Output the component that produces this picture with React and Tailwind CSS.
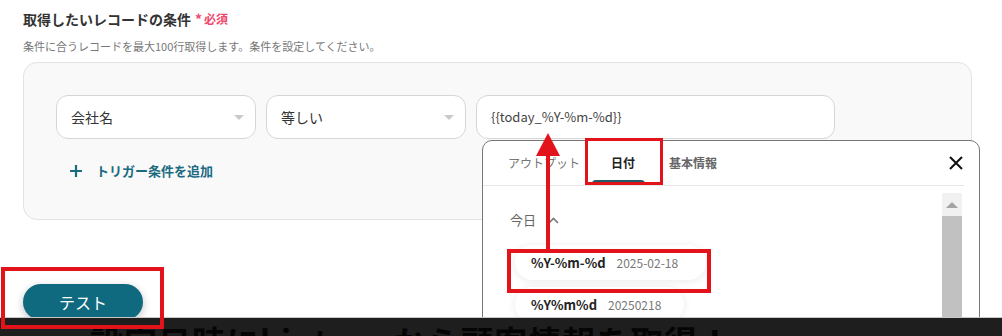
import React from 'react'

const jp = { fontFamily: '"Noto Sans CJK JP", "Noto Sans", sans-serif' }

function SelectBox({ label, width }) {
  return (
    <div className={`relative flex items-center h-[44px] ${width} bg-white border border-[#d6d6d6] rounded-[12px] pl-[14px] pr-[11px]`}>
      <span className="text-[14px] text-[#333]">{label}</span>
      <span className="ml-auto w-0 h-0 border-l-[5px] border-r-[5px] border-t-[5px] border-l-transparent border-r-transparent border-t-[#c9c9c9]" />
    </div>
  )
}

function App() {
  return (
    <div style={jp} className="relative w-[1002px] h-[336px] overflow-hidden bg-white">
      {/* 見出し */}
      <div className="pl-[23px] pt-[9px]">
        <div className="flex items-center h-[20px]">
          <span className="text-[14px] font-bold text-[#333]">取得したいレコードの条件</span>
          <span className="ml-[4px] text-[14px] font-bold text-[#f0486a]">*</span>
          <span className="ml-[2px] text-[12px] font-bold text-[#f0486a]">必須</span>
        </div>
        <p className="mt-[9px] text-[11px] leading-[16px] text-[#777]">条件に合うレコードを最大100行取得します。条件を設定してください。</p>
      </div>

      {/* 条件パネル */}
      <div className="ml-[23px] mt-[8px] w-[949px] h-[158px] rounded-[14px] border border-[#e2e2e8] bg-[#f9f9fa] pl-[32px] pt-[32px]">
        <div className="flex gap-[10px]">
          <SelectBox label="会社名" width="w-[200px]" />
          <SelectBox label="等しい" width="w-[200px]" />
          <div className="flex items-center h-[44px] w-[359px] bg-white border border-[#d6d6d6] rounded-[12px] pl-[14px]">
            <span className="text-[13px] text-[#444]">{'{{today_%Y-%m-%d}}'}</span>
          </div>
        </div>
        <button className="mt-[22px] ml-[13px] flex items-center gap-[13px] text-[#1a6a80]">
          <svg width="14" height="14" viewBox="0 0 14 14" fill="none" stroke="currentColor" strokeWidth="2.2">
            <path d="M7 1v12M1 7h12" />
          </svg>
          <span className="text-[13px] font-bold">トリガー条件を追加</span>
        </button>
      </div>

      {/* テストボタン */}
      <div className="pl-[23px] mt-[64px]">
        <button className="w-[120px] h-[36px] rounded-full bg-[#0f6a80] text-white text-[16px] shadow-[0_3px_8px_rgba(0,0,0,0.25)]">
          テスト
        </button>
      </div>

      {/* ポップアップ */}
      <div className="absolute left-[482px] top-[140px] w-[498px] h-[240px] bg-white border border-[#777] rounded-[10px]">
        <div className="relative flex items-end h-[45px] border-b border-[#e6e6e6] mr-[15px]">
          <div className="flex items-center h-[45px] pl-[25px] pr-[12px]">
            <span className="text-[12px] text-[#777]">アウトプット</span>
          </div>
          <div className="relative flex items-center justify-center h-[45px] w-[56px]">
            <span className="text-[12px] font-bold text-[#222] pl-[6px]">日付</span>
            <span className="absolute bottom-0 left-0 right-[3px] h-[5px] rounded-t-[4px] bg-[#1d5c6b]" />
          </div>
          <div className="flex items-center h-[45px] pl-[21px]">
            <span className="text-[12px] font-bold text-[#666]">基本情報</span>
          </div>
          <svg className="ml-auto self-center" width="16" height="16" viewBox="0 0 16 16" stroke="#111" strokeWidth="2">
            <path d="M2 2l12 12M14 2L2 14" />
          </svg>
        </div>

        <div className="flex">
          <div className="flex-1 pl-[27px] pt-[24px]">
            <div className="flex items-center gap-[12px] h-[20px]">
              <span className="text-[13px] text-[#666]">今日</span>
              <svg width="11" height="7" viewBox="0 0 11 7" fill="none" stroke="#777" strokeWidth="1.6">
                <path d="M1 6l4.5-4.5L10 6" />
              </svg>
            </div>
            <div className="mt-[15px] ml-[5px] flex flex-col gap-[7px]">
              <div className="flex items-center w-[191px] h-[35px] rounded-full bg-white shadow-[0_1px_8px_rgba(0,0,0,0.09)] pl-[16px] gap-[11px]">
                <span className="text-[13px] font-semibold text-[#222]">%Y-%m-%d</span>
                <span className="text-[12px] text-[#777]">2025-02-18</span>
              </div>
              <div className="flex items-center w-[169px] h-[35px] rounded-full bg-white shadow-[0_1px_8px_rgba(0,0,0,0.09)] pl-[16px] gap-[11px]">
                <span className="text-[13px] font-semibold text-[#222]">%Y%m%d</span>
                <span className="text-[12px] text-[#777]">20250218</span>
              </div>
            </div>
          </div>
          {/* スクロールバー */}
          <div className="mt-[7px] mr-[17px] w-[20px] flex flex-col">
            <div className="h-[23px] bg-[#f1f1f1] flex items-center justify-center">
              <span className="w-0 h-0 border-l-[6px] border-r-[6px] border-b-[6px] border-l-transparent border-r-transparent border-b-[#a3a3a3]" />
            </div>
            <div className="h-[140px] bg-[#c1c1c1]" />
          </div>
        </div>
      </div>

      {/* 赤い注釈 */}
      <div className="absolute left-[585px] top-[138px] w-[78px] h-[47px] border-[3px] border-[#e3131b]" />
      <div className="absolute left-[507px] top-[249px] w-[204px] h-[44px] border-[4px] border-[#e3131b]" />
      <svg className="absolute left-[534px] top-[130px]" width="28" height="122" viewBox="0 0 28 122">
        <path d="M14 3L26 26H2z" fill="#e3131b" />
        <rect x="12" y="24" width="4" height="96" fill="#e3131b" />
      </svg>

      {/* 下部の帯 */}
      <div className="absolute left-0 top-[317px] w-full h-[19px] border-t border-[#c8c8c8] bg-[#1e1e1e] overflow-hidden">
        <p className="pl-[90px] pt-[3px] text-[33px] leading-[40px] font-bold text-[#050505] whitespace-nowrap tracking-[1px]">
          設定日時にkintoneから顧客情報を取得！
        </p>
      </div>

      <div className="absolute left-[1px] top-[267px] w-[163px] h-[62px] border-[4px] border-[#e3131b]" />
    </div>
  )
}

export default App
